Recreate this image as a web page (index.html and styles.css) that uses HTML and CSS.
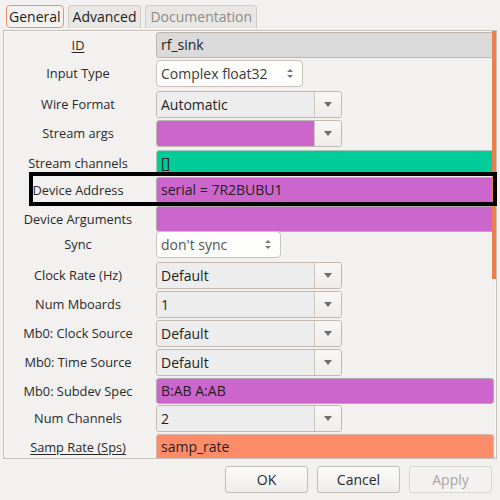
FILE: index.html
```html
<!DOCTYPE html>
<html>
<head>
<meta charset="utf-8">
<link rel="stylesheet" href="styles.css">
</head>
<body>
<div class="dialog">
  <div class="tabs">
    <div class="tab active">General</div>
    <div class="tab">Advanced</div>
    <div class="tab muted">Documentation</div>
  </div>
  <div class="panel">
    <div class="form">
      <div class="label u">ID</div>
      <div class="cell"><div class="entry ro">rf_sink</div></div>

      <div class="label">Input Type</div>
      <div class="cell"><div class="spin w147">Complex float32<span class="updown"><i class="up"></i><i class="dn"></i></span></div></div>

      <div class="label">Wire Format</div>
      <div class="cell"><div class="combo"><span class="val">Automatic</span><span class="btn"><i class="arr"></i></span></div></div>

      <div class="label">Stream args</div>
      <div class="cell"><div class="combo"><span class="val mag"></span><span class="btn"><i class="arr"></i></span></div></div>

      <div class="label">Stream channels</div>
      <div class="cell"><div class="entry green">[]</div></div>

      <div class="label">Device Address</div>
      <div class="cell"><div class="entry mag">serial = 7R2BUBU1</div></div>

      <div class="label">Device Arguments</div>
      <div class="cell"><div class="entry mag"></div></div>

      <div class="label">Sync</div>
      <div class="cell"><div class="spin w125 light">don't sync<span class="updown"><i class="up"></i><i class="dn"></i></span></div></div>

      <div class="label">Clock Rate (Hz)</div>
      <div class="cell"><div class="combo"><span class="val">Default</span><span class="btn"><i class="arr"></i></span></div></div>

      <div class="label">Num Mboards</div>
      <div class="cell"><div class="combo"><span class="val">1</span><span class="btn"><i class="arr"></i></span></div></div>

      <div class="label">Mb0: Clock Source</div>
      <div class="cell"><div class="combo"><span class="val">Default</span><span class="btn"><i class="arr"></i></span></div></div>

      <div class="label">Mb0: Time Source</div>
      <div class="cell"><div class="combo"><span class="val">Default</span><span class="btn"><i class="arr"></i></span></div></div>

      <div class="label">Mb0: Subdev Spec</div>
      <div class="cell"><div class="entry mag">B:AB A:AB</div></div>

      <div class="label">Num Channels</div>
      <div class="cell"><div class="combo"><span class="val">2</span><span class="btn"><i class="arr"></i></span></div></div>

      <div class="label u">Samp Rate (Sps)</div>
      <div class="cell"><div class="entry salmon">samp_rate</div></div>
    </div>
    <div class="scroll"></div>
  </div>
  <div class="highlight"></div>
  <div class="buttons">
    <div class="button">OK</div>
    <div class="button">Cancel</div>
    <div class="button disabled">Apply</div>
  </div>
</div>
</body>
</html>
```
FILE: styles.css
```css
html, body {
  margin: 0;
  padding: 0;
  background: #f2f1f0;
}
body {
  font-family: "Open Sans", "DejaVu Sans", sans-serif;
  font-size: 12.8px;
  color: #2c2c2c;
  width: 500px;
  height: 500px;
  overflow: hidden;
}
.dialog {
  position: relative;
  padding: 4px 3px 0 3px;
}
.tabs {
  display: flex;
  gap: 4px;
  padding-left: 3px;
  height: 26px;
}
.tab {
  height: 22px;
  margin-top: 1px;
  padding: 0 4px;
  line-height: 22px;
  font-size: 14px;
  border: 1px solid #cfcac4;
  border-bottom: none;
  border-radius: 4px 4px 0 0;
  background: #e9e7e4;
  color: #222;
}
.tab.active {
  background: #f3f2f1;
  border: 1px solid #f0916c;
  border-radius: 4px;
  height: 21px;
  line-height: 21px;
  padding: 0 2px;
}
.tab.muted {
  color: #8d8a87;
}
.panel {
  position: relative;
  box-sizing: border-box;
  height: 429px;
  border: 1px solid #c6c0ba;
  box-shadow: inset 0 0 0 1px #f7f6f5;
  overflow: hidden;
  padding: 1px 2px 0 0;
}
.form {
  display: grid;
  grid-template-columns: 148px 338px;
  column-gap: 4px;
  grid-template-rows: 28px 31px 29px 30px 27px 29px 25px 31px 29px 29px 29px 29px 27px 29px 26px;
}
.label {
  text-align: center;
  line-height: 27px;
  color: #2a2a2a;
  white-space: nowrap;
}
.label.u {
  text-decoration: underline;
  text-underline-offset: 2px;
}
.cell {
  display: flex;
  align-items: flex-start;
}
.entry {
  box-sizing: border-box;
  width: 338px;
  height: 26px;
  line-height: 24px;
  padding: 0 4px;
  font-size: 14px;
  color: #1f1f1f;
  border: 1px solid #bdb6ae;
  border-radius: 3px;
  background: #fff;
}
.entry.ro { background: #dadada; }
.entry.mag { background: #cc66cc; border-color: #b6a9b3; }
.entry.green { background: #00cc99; border-color: #a8c9bc; }
.entry.salmon { background: #ff8c69; border-color: #d7b4a6; }
.spin {
  position: relative;
  box-sizing: border-box;
  height: 27px;
  line-height: 25px;
  padding: 0 4px;
  font-size: 14px;
  color: #3a3a3a;
  border: 1px solid #c9c3bd;
  border-radius: 4px;
  background: #fdfdfc;
}
.spin.w147 { width: 147px; }
.spin.w125 { width: 125px; }
.spin.light { color: #555; }
.updown {
  position: absolute;
  right: 9px;
  top: 8px;
  display: flex;
  flex-direction: column;
  gap: 3px;
}
.updown i {
  display: block;
  width: 0;
  height: 0;
  border-left: 3px solid transparent;
  border-right: 3px solid transparent;
}
.updown .up { border-bottom: 3px solid #777; }
.updown .dn { border-top: 3px solid #777; }
.combo {
  display: flex;
  box-sizing: border-box;
  width: 186px;
  height: 27px;
  border: 1px solid #c1b9b1;
  border-radius: 3px;
  overflow: hidden;
}
.combo .val {
  flex: 1;
  background: #ededed;
  line-height: 25px;
  padding: 0 4px;
  font-size: 14px;
  color: #1f1f1f;
}
.combo .val.mag { background: #cc66cc; }
.combo .btn {
  width: 26px;
  border-left: 1px solid #cdc6bf;
  background: linear-gradient(#f8f7f6, #efedeb);
  display: flex;
  align-items: center;
  justify-content: center;
}
.arr {
  display: block;
  width: 0;
  height: 0;
  border-left: 4px solid transparent;
  border-right: 4px solid transparent;
  border-top: 5px solid #6e6e6e;
}
.scroll {
  position: absolute;
  right: 0;
  top: 0;
  width: 4px;
  height: 248px;
  background: #ef7e4a;
}
.highlight {
  position: absolute;
  left: 29px;
  top: 172px;
  width: 468px;
  height: 34px;
  box-sizing: border-box;
  border: 4px solid #000;
}
.buttons {
  display: flex;
  justify-content: flex-end;
  gap: 9px;
  padding: 7px 5px 0 0;
}
.button {
  box-sizing: border-box;
  width: 83px;
  height: 27px;
  line-height: 25px;
  text-align: center;
  font-size: 14px;
  color: #2a2a2a;
  border: 1px solid #c4beb8;
  border-radius: 3px;
  background: linear-gradient(#fbfbfa, #efedeb);
}
.button.disabled {
  color: #a8a5a2;
  border-color: #d9d5d1;
  background: #f3f2f1;
}
```
